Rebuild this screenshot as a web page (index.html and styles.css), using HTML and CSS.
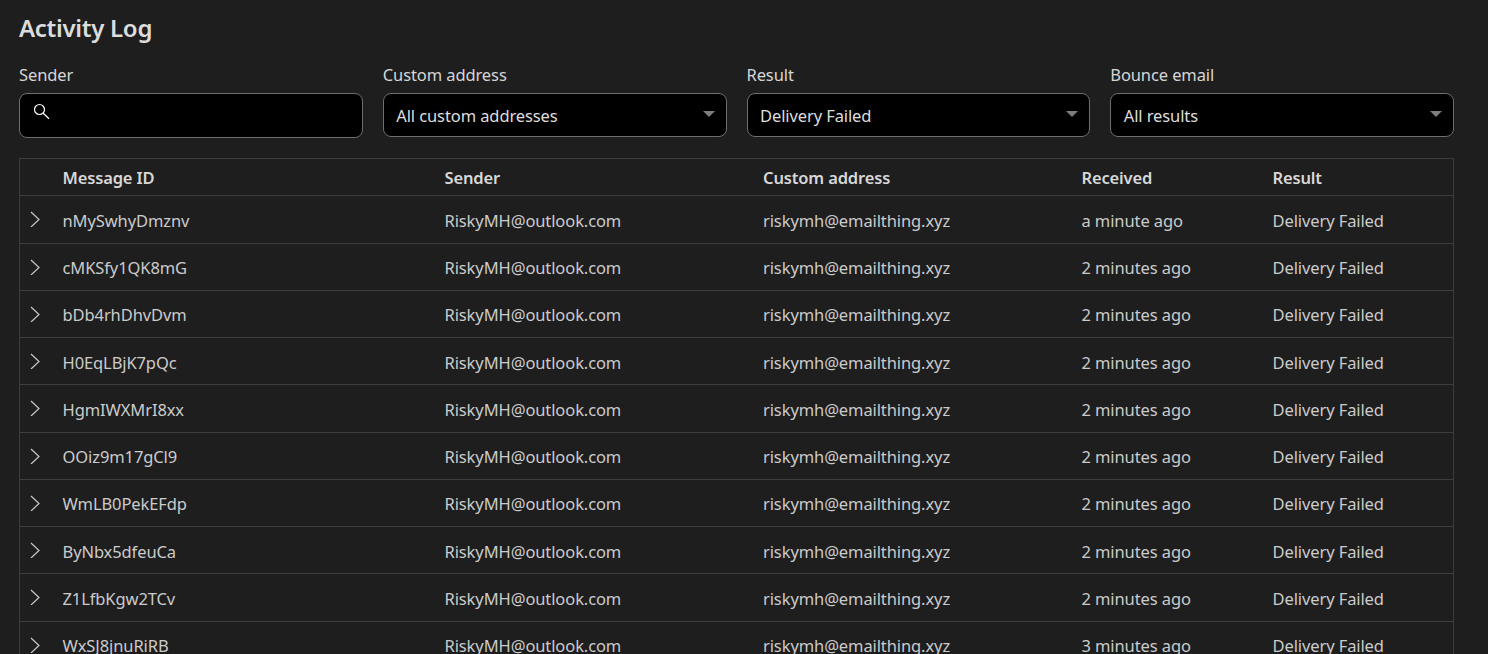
FILE: index.html
```html
<!DOCTYPE html>
<html lang="en">
<head>
<meta charset="utf-8">
<title>Activity Log</title>
<link rel="stylesheet" href="styles.css">
</head>
<body>
<main class="page">
  <h1 class="title">Activity Log</h1>
  <form class="filters">
    <div class="field">
      <span class="label">Sender</span>
      <div class="control search">
        <svg class="search-icon" viewBox="0 0 17 17" width="17" height="17" aria-hidden="true"><circle cx="6.5" cy="6.5" r="5" fill="none" stroke="currentColor" stroke-width="1.2"/><path d="M10.2 10.2 16 15.8" fill="none" stroke="currentColor" stroke-width="1.2"/></svg>
      </div>
    </div>
    <div class="field">
      <span class="label">Custom address</span>
      <div class="control select"><span>All custom addresses</span><i class="caret"></i></div>
    </div>
    <div class="field">
      <span class="label">Result</span>
      <div class="control select"><span>Delivery Failed</span><i class="caret"></i></div>
    </div>
    <div class="field">
      <span class="label">Bounce email</span>
      <div class="control select"><span>All results</span><i class="caret"></i></div>
    </div>
  </form>
  <div class="table-box">
    <div class="row head">
      <div></div><div>Message ID</div><div>Sender</div><div>Custom address</div><div>Received</div><div>Result</div>
    </div>
    <div class="row"><svg class="chev" viewBox="0 0 10 16" width="10" height="16"><path d="M1 1l8 7.5L1 16"/></svg><div>nMySwhyDmznv</div><div>RiskyMH@outlook.com</div><div>riskymh@emailthing.xyz</div><div>a minute ago</div><div>Delivery Failed</div></div>
    <div class="row"><svg class="chev" viewBox="0 0 10 16" width="10" height="16"><path d="M1 1l8 7.5L1 16"/></svg><div>cMKSfy1QK8mG</div><div>RiskyMH@outlook.com</div><div>riskymh@emailthing.xyz</div><div>2 minutes ago</div><div>Delivery Failed</div></div>
    <div class="row"><svg class="chev" viewBox="0 0 10 16" width="10" height="16"><path d="M1 1l8 7.5L1 16"/></svg><div>bDb4rhDhvDvm</div><div>RiskyMH@outlook.com</div><div>riskymh@emailthing.xyz</div><div>2 minutes ago</div><div>Delivery Failed</div></div>
    <div class="row"><svg class="chev" viewBox="0 0 10 16" width="10" height="16"><path d="M1 1l8 7.5L1 16"/></svg><div>H0EqLBjK7pQc</div><div>RiskyMH@outlook.com</div><div>riskymh@emailthing.xyz</div><div>2 minutes ago</div><div>Delivery Failed</div></div>
    <div class="row"><svg class="chev" viewBox="0 0 10 16" width="10" height="16"><path d="M1 1l8 7.5L1 16"/></svg><div>HgmIWXMrI8xx</div><div>RiskyMH@outlook.com</div><div>riskymh@emailthing.xyz</div><div>2 minutes ago</div><div>Delivery Failed</div></div>
    <div class="row"><svg class="chev" viewBox="0 0 10 16" width="10" height="16"><path d="M1 1l8 7.5L1 16"/></svg><div>OOiz9m17gCl9</div><div>RiskyMH@outlook.com</div><div>riskymh@emailthing.xyz</div><div>2 minutes ago</div><div>Delivery Failed</div></div>
    <div class="row"><svg class="chev" viewBox="0 0 10 16" width="10" height="16"><path d="M1 1l8 7.5L1 16"/></svg><div>WmLB0PekEFdp</div><div>RiskyMH@outlook.com</div><div>riskymh@emailthing.xyz</div><div>2 minutes ago</div><div>Delivery Failed</div></div>
    <div class="row"><svg class="chev" viewBox="0 0 10 16" width="10" height="16"><path d="M1 1l8 7.5L1 16"/></svg><div>ByNbx5dfeuCa</div><div>RiskyMH@outlook.com</div><div>riskymh@emailthing.xyz</div><div>2 minutes ago</div><div>Delivery Failed</div></div>
    <div class="row"><svg class="chev" viewBox="0 0 10 16" width="10" height="16"><path d="M1 1l8 7.5L1 16"/></svg><div>Z1LfbKgw2TCv</div><div>RiskyMH@outlook.com</div><div>riskymh@emailthing.xyz</div><div>2 minutes ago</div><div>Delivery Failed</div></div>
    <div class="row"><svg class="chev" viewBox="0 0 10 16" width="10" height="16"><path d="M1 1l8 7.5L1 16"/></svg><div>WxSJ8jnuRiRB</div><div>RiskyMH@outlook.com</div><div>riskymh@emailthing.xyz</div><div>3 minutes ago</div><div>Delivery Failed</div></div>
  </div>
</main>
</body>
</html>
```
FILE: styles.css
```css
html, body {
  margin: 0;
  height: 100%;
  overflow: hidden;
  background: #1e1e1e;
}
body {
  color: #d6d6d6;
  font-family: "Noto Sans", "Open Sans", sans-serif;
  font-size: 16.5px;
  letter-spacing: -0.1px;
}
.page {
  padding: 11px 34px 0 19px;
}
.title {
  margin: 0;
  font-size: 24px;
  line-height: 33px;
  font-weight: 600;
  color: #dcdcdc;
  letter-spacing: -0.3px;
}
.filters {
  display: grid;
  grid-template-columns: repeat(4, 1fr);
  gap: 20px;
  margin-top: 20px;
}
.label {
  display: block;
  line-height: 22px;
  margin-bottom: 7px;
}
.control {
  box-sizing: border-box;
  display: flex;
  align-items: center;
  background: #000;
  border: 1px solid #6e6e6e;
  border-radius: 8px;
  height: 44px;
  padding: 0 12px 0 12.5px;
  color: #dedede;
}
.search {
  height: 45px;
  align-items: flex-start;
  color: #fff;
}
.search-icon {
  margin-top: 9px;
}
.select {
  justify-content: space-between;
}
.caret {
  width: 0;
  height: 0;
  border-left: 6px solid transparent;
  border-right: 6px solid transparent;
  border-top: 6px solid #7d7d7d;
  margin-right: -1px;
  margin-top: -2px;
}
.filters + .table-box {
  margin-top: 20px;
}
.table-box {
  border: 1px solid #3d3d3d;
  border-bottom: 0;
  color: #cbcbcb;
}
.row {
  display: grid;
  grid-template-columns: 42.5px 382px 318.5px 318.5px 191px 1fr;
  align-items: center;
  height: 47.25px;
  padding-top: 1.5px;
  box-sizing: border-box;
  border-top: 1px solid #3d3d3d;
}
.row > div {
  white-space: nowrap;
}
.head {
  height: 36.4px;
  padding-top: 1px;
  border-top: 0;
  font-weight: 600;
  color: #d8d8d8;
  letter-spacing: -0.15px;
}
.chev {
  margin-left: 10px;
  margin-top: -2px;
  fill: none;
  stroke: #c8c8c8;
  stroke-width: 1.2;
}
```
